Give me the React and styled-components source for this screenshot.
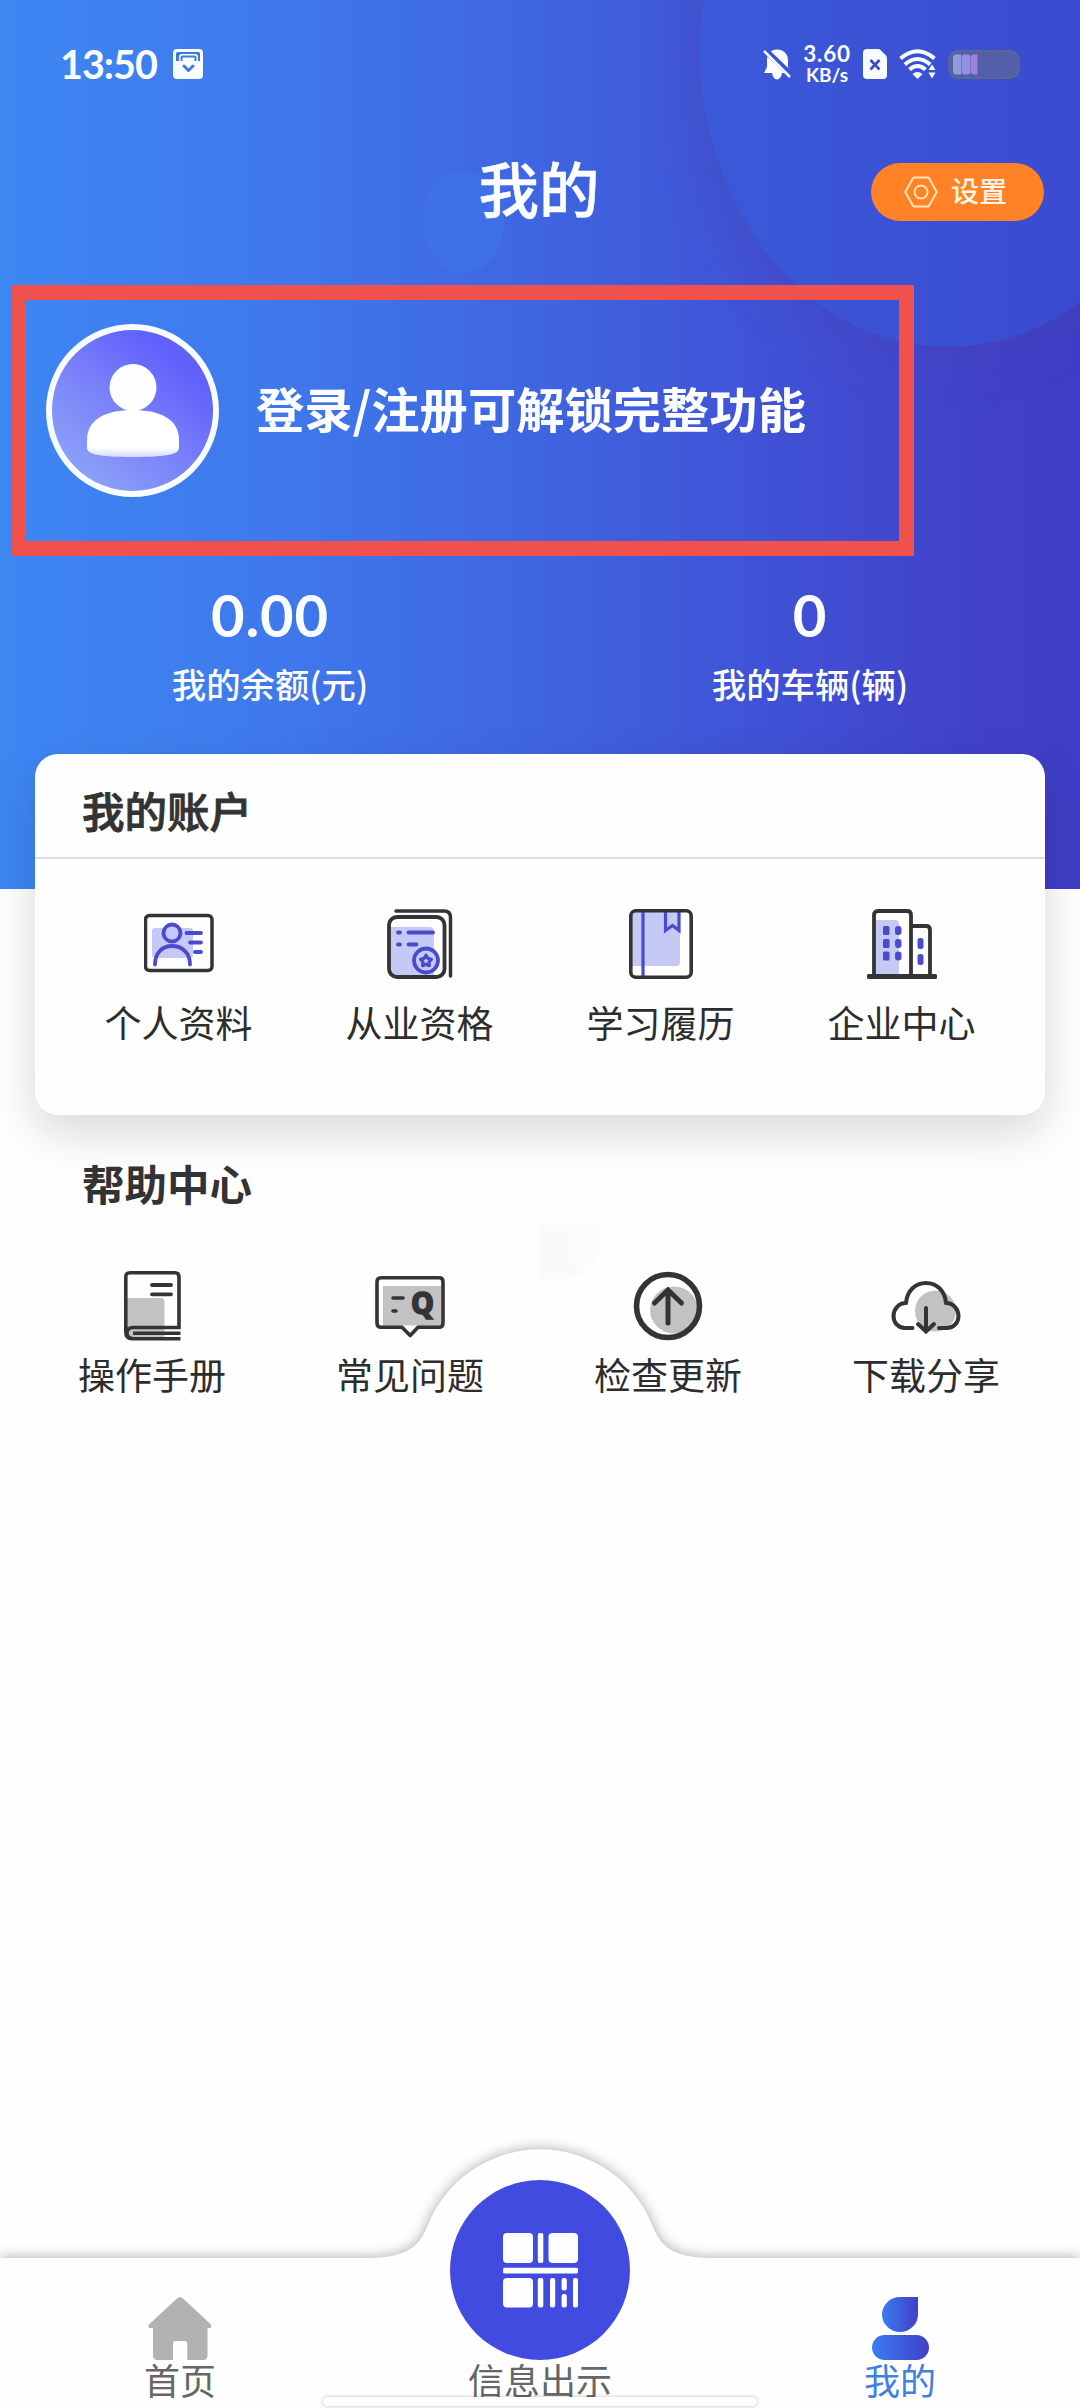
import React from "react";
import styled, { createGlobalStyle } from "styled-components";

const GlobalStyle = createGlobalStyle`
  * { box-sizing: border-box; }
  body {
    margin: 0;
    background: #fefefe;
    font-family: "Noto Sans CJK SC", "Noto Sans", sans-serif;
    color: #333;
  }
  svg { display: block; flex: none; }
`;

const Page = styled.div`
  display: flex;
  flex-direction: column;
  width: 1080px;
  height: 2408px;
  overflow: hidden;
  background: #fefefe;
`;

const Header = styled.header`
  position: relative;
  display: flex;
  flex-direction: column;
  flex: none;
  height: 889px;
  color: #fbfdff;
  background: linear-gradient(90deg, #3d87f3 0%, #3f79ec 25%, #3f65e0 50%, #4051d5 72%, #4042c9 90%, #403dc6 100%);
`;

const Decor = styled.svg`
  position: absolute;
  inset: 0;
`;

const StatusBar = styled.div`
  position: relative;
  display: flex;
  align-items: center;
  justify-content: space-between;
  height: 128px;
  padding: 0 60px 0 60px;
`;

const StatusGroup = styled.div`
  display: flex;
  align-items: center;
  gap: ${(p) => p.$gap}px;
`;

const Clock = styled.span`
  font-family: Lato, sans-serif;
  font-size: 39.5px;
  line-height: 40px;
  font-weight: 700;
  letter-spacing: -1px;
  width: 98px;
  white-space: nowrap;
`;

const Speed = styled.div`
  display: flex;
  flex-direction: column;
  align-items: center;
  width: 48px;
  font-family: Lato, sans-serif;
  font-weight: 700;
  white-space: nowrap;
`;

const SpeedValue = styled.span`
  font-size: 22.5px;
  line-height: 22px;
  letter-spacing: 0.8px;
`;

const SpeedUnit = styled.span`
  font-size: 19px;
  line-height: 20px;
`;

const TitleBar = styled.div`
  position: relative;
  display: grid;
  grid-template-columns: 1fr auto 1fr;
  align-items: center;
  height: 124px;
  padding: 0 36px;
`;

const Title = styled.h1`
  grid-column: 2;
  margin: -6px 2px 0 0;
  font-size: 60.5px;
  line-height: 80px;
  font-weight: 500;
  -webkit-text-stroke: 0.5px #fbfdff;
`;

const SettingsButton = styled.button`
  justify-self: end;
  display: flex;
  align-items: center;
  justify-content: center;
  gap: 13px;
  width: 173px;
  height: 58px;
  padding: 0 4px 0 0;
  margin-top: 4px;
  border: 0;
  border-radius: 29px;
  background: #ff8226;
  color: #fff6ea;
  font: 500 28px/40px "Noto Sans CJK SC", sans-serif;

  span { margin-top: -5px; }
`;

const Profile = styled.section`
  position: relative;
  display: flex;
  align-items: center;
  gap: 37px;
  width: 903px;
  height: 271px;
  margin: 33px 0 0 11px;
  padding: 0 0 20px 20px;
  border: 15px solid #f0524b;
`;

const Avatar = styled.div`
  display: flex;
  align-items: center;
  justify-content: center;
  flex: none;
  width: 173px;
  height: 173px;
  border: 6px solid #f8fdff;
  border-radius: 50%;
  background: linear-gradient(40deg, #8a9ff8 15%, #7b83fa 45%, #6060fb 80%);
`;

const ProfileText = styled.div`
  font-size: 48.3px;
  line-height: 60px;
  font-weight: 700;
  margin-top: -7px;
  white-space: nowrap;
`;

const Stats = styled.div`
  position: relative;
  display: grid;
  grid-template-columns: 1fr 1fr;
  padding-top: 20px;
`;

const Stat = styled.div`
  display: flex;
  flex-direction: column;
  align-items: center;
`;

const StatValue = styled.div`
  font-family: Lato, sans-serif;
  font-size: 58px;
  line-height: 70px;
  font-weight: 700;
  letter-spacing: 0.8px;
  padding-top: 4px;
`;

const StatLabel = styled.div`
  font-size: 34.4px;
  line-height: 50px;
  font-weight: 500;
  margin-top: 8px;
`;

const Card = styled.section`
  position: relative;
  display: flex;
  flex-direction: column;
  flex: none;
  width: 1010px;
  height: 361px;
  margin: -135px auto 0;
  border-radius: 23px;
  background: #fefefe;
  box-shadow: 0 18px 46px rgba(0, 0, 0, 0.15);
`;

const CardHeader = styled.div`
  display: flex;
  align-items: center;
  height: 105px;
  padding: 9px 47px 0;
  border-bottom: 2px solid #dcdfe1;
`;

const SectionTitle = styled.h2`
  margin: 0;
  font-size: 42.5px;
  line-height: 60px;
  font-weight: ${(p) => p.$weight};
  color: #333;
  -webkit-text-stroke: ${(p) => (p.$weight === 500 ? "0.9px" : "0")} #333;
`;

const ItemGrid = styled.div`
  display: grid;
  grid-template-columns: repeat(4, 1fr);
  padding: ${(p) => p.$pad};
`;

const Item = styled.div`
  display: flex;
  flex-direction: column;
  align-items: center;
  gap: ${(p) => p.$gap}px;
`;

const ItemLabel = styled.span`
  font-size: 37px;
  line-height: 52px;
  font-weight: 400;
  color: #2d2d2d;
  white-space: nowrap;
`;

const Help = styled.section`
  position: relative;
  display: flex;
  flex-direction: column;
  margin-top: 38px;
`;

const HelpHeader = styled.div`
  padding-left: 82px;
`;

const Ghost = styled.div`
  position: absolute;
  left: 540px;
  top: 72px;
  width: 62px;
  height: 54px;
  border-radius: 0 0 40px 0;
  background: linear-gradient(90deg, #f9f9f9, #fcfcfc);
`;

const Nav = styled.nav`
  position: relative;
  display: grid;
  grid-template-columns: repeat(3, 1fr);
  align-items: end;
  flex: none;
  height: 150px;
  margin-top: auto;
`;

const NavShape = styled.svg`
  position: absolute;
  left: 0;
  bottom: 0;
`;

const NavItem = styled.div`
  position: relative;
  display: flex;
  flex-direction: column;
  align-items: center;
  align-self: end;
  padding-bottom: 10px;
`;

const NavLabel = styled.span`
  font-size: 36px;
  line-height: 38px;
  color: ${(p) => p.$color};
`;

const ScanButton = styled.div`
  display: flex;
  align-items: center;
  justify-content: center;
  width: 180px;
  height: 180px;
  margin-top: -80px;
  border-radius: 50%;
  background: #424be0;
`;

const HomeIndicator = styled.div`
  position: absolute;
  left: 323px;
  bottom: 2px;
  width: 434px;
  height: 9px;
  border-radius: 5px;
  background: #fff;
  box-shadow: 0 0 3px 1px rgba(0, 0, 0, 0.16);
`;

const INK = "#333435";
const BLUE = "#4a4bcb";
const TINT = "#c5c9f6";
const GREY = "#c2c2c2";

const ReminderIcon = () => (
  <svg width="30" height="30" viewBox="0 0 30 30">
    <rect width="30" height="30" rx="4" fill="#f8fdff" />
    <path d="M3 12V4.500Q3 3 4.500 3H25.500Q27 3 27 4.500V12H25V8Q25 5 22 5H9Q6 5 6 8V12Z" fill="#4179d6" />
    <path d="M8.500 12V8.500Q8.500 7.500 9.500 7.500H21.500Q22.500 7.500 22.500 8.500V12" fill="none" stroke="#4179d6" strokeWidth="2" />
    <path d="M11 17l4.500 4.500L20 17" fill="none" stroke="#4179d6" strokeWidth="3" strokeLinecap="round" strokeLinejoin="round" />
  </svg>
);

const MutedBell = () => (
  <svg width="28" height="31" viewBox="0 0 28 31">
    <path d="M14 0.500c6.500 0 11 4.300 11 10.500v7l2 6H1l3-6V11C4 4.800 8 .5 14 .5Z" fill="#f8fdff" />
    <path d="M9 23a5 7.500 0 0 0 10 0Z" fill="#f8fdff" />
    <path d="M0 -1L29 27" stroke="#3b54d4" strokeWidth="6" />
    <path d="M1 2L27 28" stroke="#f8fdff" strokeWidth="2.500" />
  </svg>
);

const SimIcon = () => (
  <svg width="24" height="30" viewBox="0 0 24 30">
    <path d="M4 0H15.500Q16.500 0 17.500 1L23 6.500Q24 7.500 24 9V26Q24 30 20 30H4Q0 30 0 26V4Q0 0 4 0Z" fill="#f8fdff" />
    <path d="M7.500 11l9 9.500M16.500 11l-9 9.500" stroke="#3b4bcd" strokeWidth="2.600" />
  </svg>
);

const WifiIcon = () => (
  <svg width="37" height="30" viewBox="0 0 37 30">
    <g fill="none" stroke="#f8fdff" strokeWidth="4">
      <path d="M1.500 9.500Q18.500 -5 35.500 9.500" />
      <path d="M5.800 15.500Q18.500 4.500 31.200 15.500" />
      <path d="M10.500 20.500Q18.500 13.500 26.500 20.500" />
    </g>
    <path d="M13.500 25Q18.500 21 23.500 25L18.500 30Z" fill="#f8fdff" />
    <path d="M33 15.500l3.500 5.500h-7ZM33 29.500l3.500-6h-7Z" fill="#f8fdff" />
  </svg>
);

const BatteryIcon = () => (
  <svg width="72" height="29" viewBox="0 0 72 29">
    <rect x="1" y="1" width="70" height="27" rx="9" fill="#545faa" stroke="#5b6790" strokeWidth="2" />
    <path d="M8 4.500h5v20H8q-3 0-3-3v-14q0-3 3-3Z" fill="#8d9ed8" />
    <rect x="13.500" y="4.500" width="9" height="20" rx="3" fill="#9490ea" />
    <path d="M26 4.500h3.500v20H26q-3 0-3-3v-14q0-3 3-3Z" fill="#a281dc" />
  </svg>
);

const HexIcon = () => (
  <svg width="34" height="32" viewBox="0 0 34 32" fill="none" stroke="#ffe6bd" strokeWidth="2">
    <path d="M9.500 1.500h15L32.800 16l-8.300 14.500h-15L1.200 16Z" strokeLinejoin="round" />
    <circle cx="17" cy="16" r="6.500" />
  </svg>
);

const PersonFigure = () => (
  <svg width="94" height="94" viewBox="0 0 94 94">
    <defs>
      <linearGradient id="body" x1="0" y1="0" x2="0" y2="1">
        <stop offset="0.8" stopColor="#fff" />
        <stop offset="1" stopColor="#d5dafc" />
      </linearGradient>
    </defs>
    <circle cx="47" cy="23.500" r="23.500" fill="#fdfeff" />
    <path d="M47 46C72 46 93 54 93 76V84C93 90 82 93 47 93C12 93 1 90 1 84V76C1 54 22 46 47 46Z" fill="url(#body)" />
  </svg>
);

const ProfileIcon = () => (
  <svg width="70" height="70" viewBox="0 0 70 70">
    <rect x="8" y="19" width="41" height="30" rx="3" fill={TINT} />
    <rect x="1.500" y="6.500" width="66.500" height="55" rx="4" fill="none" stroke={INK} strokeWidth="3.500" />
    <g fill="none" stroke={BLUE} strokeWidth="3.800" strokeLinecap="round">
      <circle cx="28" cy="24" r="8.500" fill="#c2cbfb" />
      <path d="M11 55.500C11 44 18 37 28 37S46 44 46 55.500" />
      <path d="M42.500 24H57M46 33.500H57M51 43H57" />
    </g>
  </svg>
);

const CertificateIcon = () => (
  <svg width="66" height="70" viewBox="0 0 66 70">
    <path d="M3 20Q3 18 5 18H42Q47 18 47 23V66H10Q3 66 3 58Z" fill={TINT} />
    <rect x="2" y="8" width="55.500" height="60" rx="8" fill="none" stroke={INK} strokeWidth="3.800" />
    <path d="M9 2H57Q63.500 2 63.500 8.500V67" fill="none" stroke={INK} strokeWidth="3.500" strokeLinecap="round" />
    <g fill="none" stroke={BLUE} strokeWidth="3.800" strokeLinecap="round" strokeLinejoin="round">
      <path d="M11 23.500H13M21.500 23.500H46M11 35.500H13M21.500 35.500H29.500" />
      <circle cx="39" cy="51.500" r="12" fill="#c2cbfb" />
      <path d="M39 46.200l1.900 3.200 3.600.8-2.500 2.800.4 3.700-3.400-1.500-3.400 1.500.4-3.700-2.500-2.800 3.600-.8Z" strokeWidth="3.200" />
    </g>
  </svg>
);

const NotebookIcon = () => (
  <svg width="64" height="70" viewBox="0 0 64 70">
    <path d="M2 3H51V53Q51 57 47 57H2Z" fill={TINT} />
    <path d="M14 3V67M36.500 3V21.500L43.500 16.500L50 21.500V3" fill="none" stroke={BLUE} strokeWidth="3.200" />
    <rect x="1.800" y="1.800" width="60.400" height="66.400" rx="5" fill="none" stroke={INK} strokeWidth="3.600" />
  </svg>
);

const CompanyIcon = () => (
  <svg width="70" height="70" viewBox="0 0 70 70">
    <path d="M7 11H28Q32 11 32 15V66H7Z" fill={TINT} />
    <g fill="none" stroke={INK} strokeWidth="3.800">
      <path d="M7 67V6Q7 2 11 2H40Q44 2 44 6V67M44 17H59Q63 17 63 21V67" />
      <path d="M2 67.500H68" strokeWidth="5" strokeLinecap="round" />
    </g>
    <g fill={BLUE}>
      {[17, 30, 42.500].map((y) => (
        <React.Fragment key={y}>
          <rect x="16" y={y} width="6.500" height="9" rx="1.500" />
          <rect x="28" y={y} width="6.500" height="9" rx="3" />
        </React.Fragment>
      ))}
      <rect x="50.500" y="29" width="6" height="11" rx="2.500" />
      <rect x="50.500" y="45" width="6" height="11" rx="2.500" />
    </g>
  </svg>
);

const ManualIcon = () => (
  <svg width="57" height="70" viewBox="0 0 57 70">
    <path d="M2 27H37Q40.500 27 40.500 31V67H6L2 60Z" fill={GREY} />
    <g fill="none" stroke={INK} strokeWidth="3.600">
      <path d="M56.500 67.800H8Q1.800 67.800 1.800 61V6Q1.800 1.800 6 1.800H51Q55 1.800 55 6V56.500H9Q3 56.500 3 62Q3 67 8 67.500" />
      <path d="M9 62.200H56.500" />
      <path d="M28 14H47M28 23.300H47" strokeWidth="3.800" strokeLinecap="round" />
    </g>
  </svg>
);

const QuestionIcon = () => (
  <svg width="70" height="70" viewBox="0 0 70 70">
    <rect x="8" y="15" width="58" height="40" fill={GREY} />
    <path d="M27 54.500L35 65L43 54.500Z" fill="#fefefe" />
    <path d="M6 6.700H64Q68 6.700 68 10.700V52Q68 56.300 64 56.300H43L35.200 64.500L27 56.300H6Q2 56.300 2 52V10.700Q2 6.700 6 6.700Z" fill="none" stroke={INK} strokeWidth="3.600" strokeLinejoin="round" />
    <path d="M18 27H28M18 40H21" stroke={INK} strokeWidth="3.600" strokeLinecap="round" />
    <text x="36" y="42.500" fontFamily="Noto Sans" fontWeight="800" fontSize="30" textLength="23" lengthAdjust="spacingAndGlyphs" fill={INK} stroke={INK} strokeWidth="1.400">Q</text>
  </svg>
);

const UpdateIcon = () => (
  <svg width="70" height="70" viewBox="0 0 70 70">
    <ellipse cx="41" cy="39" rx="24" ry="23.500" fill={GREY} />
    <g fill="none" stroke={INK} strokeLinecap="round">
      <circle cx="35" cy="35" r="31.500" strokeWidth="5.600" />
      <path d="M35 52V20M21.500 32L35 19L48.500 32" strokeWidth="5" />
    </g>
  </svg>
);

const CloudIcon = () => (
  <svg width="70" height="70" viewBox="0 0 70 70">
    <circle cx="44.500" cy="40" r="20.500" fill={GREY} />
    <g fill="none" stroke={INK} strokeWidth="4" strokeLinecap="round">
      <path d="M21.500 57H14C7 57 2.500 51.500 2.500 45C2.500 38 8 32 15 32C16 20 24 12 35 12S54 20 55 32C62 32 67.500 38 67.500 45C67.500 51.500 63 57 56 57H48" strokeLinejoin="round" />
      <path d="M35 37V60M27 53L35 60.500L43 53" />
    </g>
  </svg>
);

const HomeIcon = () => (
  <svg width="64" height="63" viewBox="0 0 64 63">
    <path d="M29 1.500Q32 -1 35 1.500L63 27.500V31H59.500V58Q59.500 63 55 63H39.300V47Q39.300 44 36.500 44H28Q25 44 25 47V63H9.500Q5 63 5 58V31H1Q0 29 1 27.500Z" fill="#b2b2b2" />
  </svg>
);

const MineIcon = () => (
  <svg width="57" height="63" viewBox="0 0 57 63">
    <defs>
      <linearGradient id="mine" x1="0" y1="0" x2="1" y2="0">
        <stop offset="0" stopColor="#3b7cf0" />
        <stop offset="1" stopColor="#403fc9" />
      </linearGradient>
    </defs>
    <path d="M28 0H46V17.500A18 17.500 0 1 1 28 0Z" fill="url(#mine)" />
    <rect y="38" width="57" height="25" rx="12.500" fill="url(#mine)" />
  </svg>
);

const CodeIcon = () => (
  <svg width="75" height="75" viewBox="0 0 75 75" fill="#fdfeff">
    <rect width="30" height="30" rx="4" />
    <rect x="45.500" width="29.500" height="30" rx="4" />
    <rect y="45" width="30" height="29.500" rx="4" />
    <rect x="34.800" width="5.500" height="30" rx="2" />
    <rect y="34.800" width="75" height="5.600" rx="1.500" />
    <rect x="34.800" y="45" width="5.500" height="29.500" rx="2" />
    <rect x="47" y="45" width="5.200" height="29.500" rx="2" />
    <rect x="58.600" y="45" width="5.200" height="12.500" rx="2" />
    <rect x="58.600" y="61" width="5.200" height="13.500" rx="2" />
    <rect x="70" y="45" width="5" height="29.500" rx="2" />
  </svg>
);

const ACCOUNT = [
  ["个人资料", ProfileIcon],
  ["从业资格", CertificateIcon],
  ["学习履历", NotebookIcon],
  ["企业中心", CompanyIcon],
];

const HELP = [
  ["操作手册", ManualIcon],
  ["常见问题", QuestionIcon],
  ["检查更新", UpdateIcon],
  ["下载分享", CloudIcon],
];

const NAV_PATH =
  "M0 150H368C400 149 417 144 427 119A121 121 0 0 1 653 119C663 144 680 149 712 150H1080V300H0Z";

export default function App() {
  return (
    <>
      <GlobalStyle />
      <Page>
        <Header>
          <Decor width="1080" height="889" viewBox="0 0 1080 889">
            <defs>
              <linearGradient id="big" x1="0" y1="0" x2="1" y2="0">
                <stop offset="0" stopColor="#3a5ad9" />
                <stop offset="0.5" stopColor="#3a50d2" />
                <stop offset="1" stopColor="#3b45cb" />
              </linearGradient>
              <linearGradient id="small" x1="0" y1="0" x2="1" y2="0.3">
                <stop offset="0" stopColor="#3f74ea" stopOpacity="0.5" />
                <stop offset="1" stopColor="#3f70e8" />
              </linearGradient>
              <filter id="soft" x="-30%" y="-30%" width="160%" height="160%">
                <feGaussianBlur stdDeviation="24" />
              </filter>
            </defs>
            <ellipse cx="944" cy="58" rx="254" ry="301" fill="#4442b0" opacity="0.38" filter="url(#soft)" />
            <ellipse cx="948" cy="50" rx="248" ry="297" fill="url(#big)" />
            <ellipse cx="463" cy="222" rx="41" ry="51" fill="url(#small)" />
          </Decor>
          <StatusBar>
            <StatusGroup $gap={15}>
              <Clock>13:50</Clock>
              <ReminderIcon />
            </StatusGroup>
            <StatusGroup $gap={12}>
              <MutedBell />
              <Speed>
                <SpeedValue>3.60</SpeedValue>
                <SpeedUnit>KB/s</SpeedUnit>
              </Speed>
              <SimIcon />
              <WifiIcon />
              <BatteryIcon />
            </StatusGroup>
          </StatusBar>
          <TitleBar>
            <Title>我的</Title>
            <SettingsButton>
              <HexIcon />
              <span>设置</span>
            </SettingsButton>
          </TitleBar>
          <Profile>
            <Avatar>
              <PersonFigure />
            </Avatar>
            <ProfileText>登录/注册可解锁完整功能</ProfileText>
          </Profile>
          <Stats>
            <Stat>
              <StatValue>0.00</StatValue>
              <StatLabel>我的余额(元)</StatLabel>
            </Stat>
            <Stat>
              <StatValue>0</StatValue>
              <StatLabel>我的车辆(辆)</StatLabel>
            </Stat>
          </Stats>
        </Header>

        <Card>
          <CardHeader>
            <SectionTitle $weight={500}>我的账户</SectionTitle>
          </CardHeader>
          <ItemGrid $pad="50px 23px 0">
            {ACCOUNT.map(([label, Icon]) => (
              <Item key={label} $gap={17}>
                <Icon />
                <ItemLabel>{label}</ItemLabel>
              </Item>
            ))}
          </ItemGrid>
        </Card>

        <Help>
          <Ghost />
          <HelpHeader>
            <SectionTitle $weight={700}>帮助中心</SectionTitle>
          </HelpHeader>
          <ItemGrid $pad="58px 25px 0 23px">
            {HELP.map(([label, Icon]) => (
              <Item key={label} $gap={7}>
                <Icon />
                <ItemLabel>{label}</ItemLabel>
              </Item>
            ))}
          </ItemGrid>
        </Help>

        <Nav>
          <NavShape width="1080" height="300" viewBox="0 0 1080 300">
            <defs>
              <filter id="lift" x="-5%" y="-20%" width="110%" height="140%">
                <feGaussianBlur stdDeviation="7" />
              </filter>
            </defs>
            <path d={NAV_PATH} fill="#000" opacity="0.34" filter="url(#lift)" />
            <path d={NAV_PATH} fill="#fefefe" />
          </NavShape>
          <NavItem>
            <HomeIcon />
            <NavLabel $color="#666">首页</NavLabel>
          </NavItem>
          <NavItem>
            <ScanButton>
              <CodeIcon />
            </ScanButton>
            <NavLabel $color="#666">信息出示</NavLabel>
          </NavItem>
          <NavItem>
            <MineIcon />
            <NavLabel $color="#437fde">我的</NavLabel>
          </NavItem>
          <HomeIndicator />
        </Nav>
      </Page>
    </>
  );
}
